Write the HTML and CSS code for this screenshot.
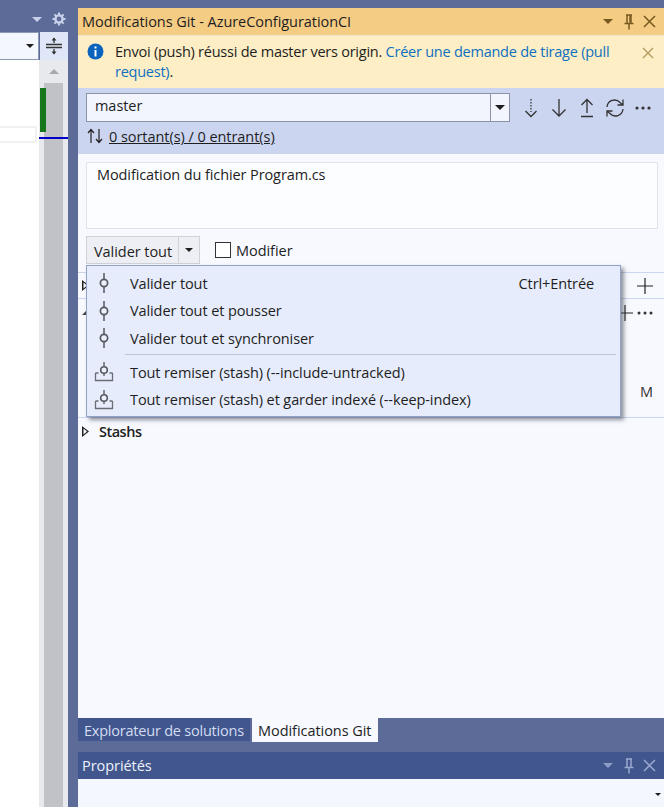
FILE: index.html
```html
<!DOCTYPE html>
<html lang="fr">
<head>
<meta charset="utf-8">
<title>Modifications Git</title>
<link rel="stylesheet" href="styles.css">
</head>
<body>
<svg class="defs" width="0" height="0" aria-hidden="true">
  <symbol id="commit" viewBox="0 0 16 20"><path d="M8 0v6.500M8 13.500V20" fill="none" stroke="#7a7d85" stroke-width="2"/><circle cx="8" cy="10" r="3.600" fill="#eef1fb" stroke="#55585f" stroke-width="1.700"/></symbol>
  <symbol id="stash" viewBox="0 0 20 20"><path d="M10 0v4.500M10 11.500V14" fill="none" stroke="#7a7d85" stroke-width="1.800"/><circle cx="10" cy="8" r="3.300" fill="#eef1fb" stroke="#55585f" stroke-width="1.600"/><path d="M1.500 11v7.500h17V11M1.500 11h3M15.500 11h3" fill="none" stroke="#6a6d75" stroke-width="1.300"/></symbol>
</svg>
<div class="app">
  <aside class="left">
    <div class="left-head">
      <span class="tri tri-pale"></span>
      <svg class="gear" width="14" height="14" viewBox="0 0 14 14"><circle cx="7" cy="7" r="3.600" fill="none" stroke="#c9d1ea" stroke-width="2.400"/><path d="M7 .5v3M7 10.500v3M.5 7h3M10.500 7h3M2.400 2.400l2 2M9.600 9.600l2 2M11.600 2.400l-2 2M4.400 9.600l-2 2" stroke="#c9d1ea" stroke-width="2"/></svg>
    </div>
    <div class="left-body">
      <div class="editor-col">
        <div class="left-combo"><span class="tri tri-dark"></span></div>
        <div class="editor"><div class="line-box"></div></div>
      </div>
      <div class="scroll-col">
        <div class="split-btn">
          <svg width="16" height="18" viewBox="0 0 16 18"><path d="M0 7.500h16M0 10.500h16" stroke="#333" stroke-width="1.300"/><path d="M8 1v5M8 12v5" stroke="#333" stroke-width="1.300"/><path d="M5.500 3.500 8 .5l2.500 3zM5.500 14.500 8 17.500l2.500-3z" fill="#333"/></svg>
        </div>
        <div class="scrollbar">
          <span class="tri-up"></span>
          <div class="thumb"></div>
          <div class="green"></div>
          <div class="blue"></div>
        </div>
      </div>
    </div>
  </aside>

  <main class="right">
    <div class="git-panel">
      <header class="title title-active">
        <span class="title-text">Modifications Git - AzureConfigurationCI</span>
        <span class="win-icons">
          <span class="tri tri-brown"></span>
          <svg width="12" height="16" viewBox="0 0 12 16"><path d="M3 1h6M4 1v8M8 1v8M1.500 9.500h9M6 10v5.500" fill="none" stroke="#75591f" stroke-width="1.500"/><path d="M7 1.500v7" stroke="#75591f" stroke-width="1.500"/></svg>
          <svg width="13" height="13" viewBox="0 0 13 13"><path d="M1 1l11 11M12 1 1 12" stroke="#75591f" stroke-width="1.500"/></svg>
        </span>
      </header>

      <div class="infobar">
        <svg class="info-icon" width="17" height="17" viewBox="0 0 17 17"><circle cx="8.500" cy="8.500" r="8" fill="#0b63bd"/><rect x="7.500" y="3.500" width="2" height="2" fill="#fff"/><rect x="7.500" y="7" width="2" height="6.500" fill="#fff"/></svg>
        <p class="info-text">Envoi (push) réussi de master vers origin. <a class="link" href="#">Créer une demande de tirage (pull request)</a>.</p>
        <svg class="info-close" width="12" height="12" viewBox="0 0 12 12"><path d="M1 1l10 10M11 1 1 11" stroke="#b39a60" stroke-width="1.400"/></svg>
      </div>

      <div class="toolbar">
        <div class="branch-row">
          <div class="branch-combo">
            <span class="branch-name">master</span>
            <span class="branch-drop"><span class="tri tri-dark tri-big"></span></span>
          </div>
          <div class="tool-icons">
            <svg width="14" height="20" viewBox="0 0 14 20"><path d="M7 1v13" stroke="#333" stroke-width="1.300" stroke-dasharray="1.500 1.500"/><path d="M1.500 13 7 18.500 12.500 13" fill="none" stroke="#333" stroke-width="1.300"/></svg>
            <svg width="16" height="20" viewBox="0 0 16 20"><path d="M8 1v17M1.500 11.500 8 18l6.500-6.500" fill="none" stroke="#333" stroke-width="1.300"/></svg>
            <svg width="14" height="20" viewBox="0 0 14 20"><path d="M7 1.500V15M1.500 7 7 1.500 12.500 7M1 18.500h12" fill="none" stroke="#333" stroke-width="1.300"/></svg>
            <svg width="20" height="20" viewBox="0 0 20 20"><path d="M2 9a7.500 7.500 0 0 1 13-4.500L18 7M18 1.500V7h-5.500M18 11a7.500 7.500 0 0 1-13 4.500L2 13M2 18.500V13h5.500" fill="none" stroke="#333" stroke-width="1.300"/></svg>
            <svg width="16" height="4" viewBox="0 0 16 4"><circle cx="2" cy="2" r="1.600" fill="#333"/><circle cx="8" cy="2" r="1.600" fill="#333"/><circle cx="14" cy="2" r="1.600" fill="#333"/></svg>
          </div>
        </div>
        <div class="sync-row">
          <svg width="16" height="16" viewBox="0 0 16 16"><path d="M4 15V1.500M1 5l3-3.500L7 5M12 1v13.500M9 11l3 3.500 3-3.500" fill="none" stroke="#222" stroke-width="1.200"/></svg>
          <a class="sync-link" href="#">0 sortant(s) / 0 entrant(s)</a>
        </div>
      </div>

      <div class="content">
        <div class="message">Modification du fichier Program.cs</div>
        <div class="commit-row">
          <div class="commit-btn">
            <span class="commit-label">Valider tout</span>
            <span class="commit-drop"><span class="tri tri-dark"></span></span>
          </div>
          <label class="amend"><span class="check"></span>Modifier</label>
        </div>
        <div class="section section-staged">
          <span class="tri-right"></span>
          <svg class="sec-plus" width="16" height="16" viewBox="0 0 16 16"><path d="M8 0v16M0 8h16" stroke="#222" stroke-width="1.200"/></svg>
        </div>
        <div class="section section-changes">
          <span class="tri-open"></span>
          <span class="sec-tools">
            <svg width="16" height="16" viewBox="0 0 16 16"><path d="M8 0v16M0 8h16" stroke="#222" stroke-width="1.200"/></svg>
            <svg width="16" height="4" viewBox="0 0 16 4"><circle cx="2" cy="2" r="1.500" fill="#333"/><circle cx="8" cy="2" r="1.500" fill="#333"/><circle cx="14" cy="2" r="1.500" fill="#333"/></svg>
          </span>
          <span class="status-m">M</span>
        </div>
        <div class="section section-stash">
          <span class="tri-right"></span>
          <strong class="stash-title">Stashs</strong>
        </div>

        <div class="menu">
          <div class="menu-item"><svg class="mi-icon" width="16" height="20"><use href="#commit"/></svg><span class="mi-text">Valider tout</span><span class="mi-key">Ctrl+Entrée</span></div>
          <div class="menu-item"><svg class="mi-icon" width="16" height="20"><use href="#commit"/></svg><span class="mi-text">Valider tout et pousser</span></div>
          <div class="menu-item"><svg class="mi-icon" width="16" height="20"><use href="#commit"/></svg><span class="mi-text">Valider tout et synchroniser</span></div>
          <div class="menu-sep"></div>
          <div class="menu-item"><svg class="mi-icon mi-stash" width="20" height="20"><use href="#stash"/></svg><span class="mi-text">Tout remiser (stash) (--include-untracked)</span></div>
          <div class="menu-item"><svg class="mi-icon mi-stash" width="20" height="20"><use href="#stash"/></svg><span class="mi-text">Tout remiser (stash) et garder indexé (--keep-index)</span></div>
        </div>
      </div>

      <nav class="tabs">
        <span class="tab">Explorateur de solutions</span>
        <span class="tab tab-on">Modifications Git</span>
      </nav>
    </div>

    <section class="props">
      <header class="title title-props">
        <span class="title-text">Propriétés</span>
        <span class="win-icons">
          <span class="tri tri-pale2"></span>
          <svg width="12" height="16" viewBox="0 0 12 16"><path d="M3 1h6M4 1v8M8 1v8M1.500 9.500h9M6 10v5.500" fill="none" stroke="#9aa8d0" stroke-width="1.500"/></svg>
          <svg width="13" height="13" viewBox="0 0 13 13"><path d="M1 1l11 11M12 1 1 12" stroke="#9aa8d0" stroke-width="1.500"/></svg>
        </span>
      </header>
      <div class="props-body"><span class="tri tri-dark tri-small"></span></div>
    </section>
  </main>
</div>
</body>
</html>
```
FILE: styles.css
```css
* { box-sizing: border-box; }
html, body { margin: 0; height: 100%; }
body {
  background: #5d6b99;
  color: #1e1e1e;
  font-family: "Open Sans", "Noto Sans", sans-serif;
  font-size: 14.5px;
  letter-spacing: -0.05px;
  overflow: hidden;
}
.defs { position: absolute; }
.app { display: flex; height: 807px; gap: 10px; }

/* triangles */
.tri { display: block; width: 0; height: 0; border-left: 5px solid transparent; border-right: 5px solid transparent; border-top: 5px solid #1e1e1e; }
.tri-pale { border-top-color: #c9d1ea; }
.tri-pale2 { border-top-color: #8e9cc8; }
.tri-brown { border-top-color: #75591f; }
.tri-dark { border-left-width: 4px; border-right-width: 4px; border-top-width: 4px; }
.tri-big { border-left-width: 5px; border-right-width: 5px; border-top-width: 5px; }
.tri-small { border-left-width: 3px; border-right-width: 3px; border-top-width: 3px; }
.tri-right { display: block; width: 7px; height: 11px; background: #222; clip-path: polygon(0 0, 100% 50%, 0 100%, 0 0, 1.5px 2.5px, 1.5px 8.5px, 5px 5.5px, 1.5px 2.5px); }
.tri-open { display: block; width: 6px; height: 6px; background: #444; clip-path: polygon(100% 0, 100% 100%, 0 100%); }

/* left editor strip */
.left { width: 68px; display: flex; flex-direction: column; flex: none; }
.left-head { height: 32px; display: flex; align-items: center; justify-content: flex-end; gap: 10px; padding: 6px 1px 0 0; }
.left-head .gear { margin-right: 1px; }
.left-body { flex: 1; display: flex; min-height: 0; }
.editor-col { width: 39px; display: flex; flex-direction: column; }
.left-combo { height: 28px; background: #f5f7fe; border: 1px solid #8c9ab8; border-left: 0; display: flex; align-items: center; justify-content: flex-end; padding-right: 4px; }
.editor { flex: 1; background: #fff; padding-top: 66px; }
.line-box { height: 17px; margin-right: 2px; border: 2px solid #f1f1f1; border-left: 0; }
.scroll-col { width: 29px; display: flex; flex-direction: column; }
.split-btn { height: 28px; margin-left: 1px; background: #dfe6f7; display: flex; align-items: center; justify-content: center; }
.scrollbar { flex: 1; position: relative; background: #e8e9ed; padding: 9px 5px 0; display: flex; flex-direction: column; align-items: center; }
.tri-up { display: block; width: 0; height: 0; border-left: 5px solid transparent; border-right: 5px solid transparent; border-bottom: 5px solid #a8a9af; margin-bottom: 9px; }
.thumb { width: 19px; flex: 1; background: #c1c2c8; }
.green { position: absolute; left: 1px; top: 28px; width: 6px; height: 44px; background: #15761a; }
.blue { position: absolute; left: 0; right: 0; top: 77px; height: 2px; background: #0000c8; }

/* right column */
.right { flex: 1; min-width: 0; display: flex; flex-direction: column; padding-top: 8px; }
.git-panel { height: 734px; display: flex; flex-direction: column; }
.title { display: flex; align-items: center; justify-content: space-between; padding: 0 8px 0 4px; flex: none; }
.title-active { height: 28px; background: #f5cc84; border-bottom: 1px solid #f0e4c8; }
.win-icons { display: flex; align-items: center; gap: 8px; }
.win-icons .tri { margin-right: 2px; }

.infobar { height: 52px; flex: none; background: #fdeec5; position: relative; padding: 6px 40px 0 37px; }
.info-icon { position: absolute; left: 9px; top: 7px; }
.info-text { margin: 0; line-height: 20px; letter-spacing: -0.24px; }
.link { color: #0e70c0; text-decoration: none; }
.info-close { position: absolute; right: 10px; top: 11px; }

.toolbar { height: 66px; flex: none; background: #ccd5f0; padding: 5px 8px 0; }
.branch-row { display: flex; align-items: center; gap: 7px; }
.branch-combo { width: 424px; flex: none; height: 29px; background: #f2f5fd; border: 1px solid #8a93a8; display: flex; align-items: center; justify-content: space-between; padding-left: 8px; }
.branch-name { position: relative; top: -2px; }
.branch-drop { width: 19px; height: 27px; border-left: 1px solid #8a93a8; display: flex; align-items: center; justify-content: center; }
.tool-icons { display: grid; grid-template-columns: repeat(5, 28px); align-items: center; justify-items: center; flex: none; margin-right: -8px; }
.sync-row { display: flex; align-items: center; gap: 6px; margin-top: 4px; padding-left: 1px; height: 20px; }
.sync-link { color: #1e1e1e; text-decoration: underline; }

.content { flex: 1; min-height: 0; background: #f7f9fe; position: relative; padding: 8px 0 0; }
.message { height: 67px; margin: 0 6px 0 8px; background: #fcfdff; border: 1px solid #e0e2e8; padding: 2px 10px; line-height: 20px; letter-spacing: -0.1px; }
.commit-row { display: flex; align-items: center; gap: 15px; margin: 7px 0 0 8px; height: 28px; }
.commit-btn { width: 114px; height: 28px; display: flex; background: #eeeff5; border: 1px solid #d0d2d9; }
.commit-label { flex: 1; padding-left: 7px; line-height: 29px; }
.commit-drop { width: 21px; border-left: 1px solid #d0d2d9; display: flex; align-items: center; justify-content: center; }
.amend { display: flex; align-items: center; gap: 5px; }
.check { width: 16px; height: 16px; background: #fff; border: 1px solid #333; }

.section { position: relative; border-bottom: 1px solid #ccd5f0; padding-left: 4px; display: flex; align-items: center; }
.section-staged { height: 27px; margin-top: 8px; border-top: 1px solid #ccd5f0; justify-content: space-between; padding-right: 11px; }
.section-changes { height: 119px; align-items: flex-start; padding-top: 10px; }
.sec-tools { position: absolute; right: 11px; top: 6px; display: flex; align-items: center; gap: 4px; }
.status-m { position: absolute; right: 11px; top: 83px; color: #333; }
.section-stash { height: 27px; border-bottom: 0; gap: 10px; }
.stash-title { font-weight: 600; font-size: 14.5px; letter-spacing: -0.5px; }

.menu { position: absolute; left: 8px; top: 111px; width: 535px; height: 152px; background: #e6ecfb; border: 1px solid #8fa3c8; box-shadow: 3px 3px 4px rgba(60, 65, 80, .55); padding: 3.5px 4px 0 0; letter-spacing: -0.1px; }
.menu-item { height: 27.500px; display: flex; align-items: center; padding-left: 9px; }
.mi-icon { flex: none; margin-right: 18px; }
.mi-stash { margin-left: -2px; margin-right: 16px; }
.mi-text { flex: 1; }
.mi-key { margin-right: 22px; }
.menu-sep { height: 1px; background: #bcc5dc; margin: 2px 0 3.5px 38px; }

.tabs { height: 24px; flex: none; display: flex; gap: 2px; align-items: flex-start; background: #5d6b99; }
.tab { height: 23px; width: 172px; background: #40568d; color: #d4dcf2; padding-left: 6px; line-height: 25px; letter-spacing: -0.22px; }
.tab-on { width: 126px; height: 24px; background: #f7f9fe; color: #1e1e1e; letter-spacing: -0.05px; }

.props { flex: 1; display: flex; flex-direction: column; padding-top: 10px; }
.title-props { height: 27px; background: #40568d; color: #eef1fb; }
.props-body { flex: 1; background: #f5f7fe; display: flex; justify-content: flex-end; padding: 14px 3px 0 0; }
```
